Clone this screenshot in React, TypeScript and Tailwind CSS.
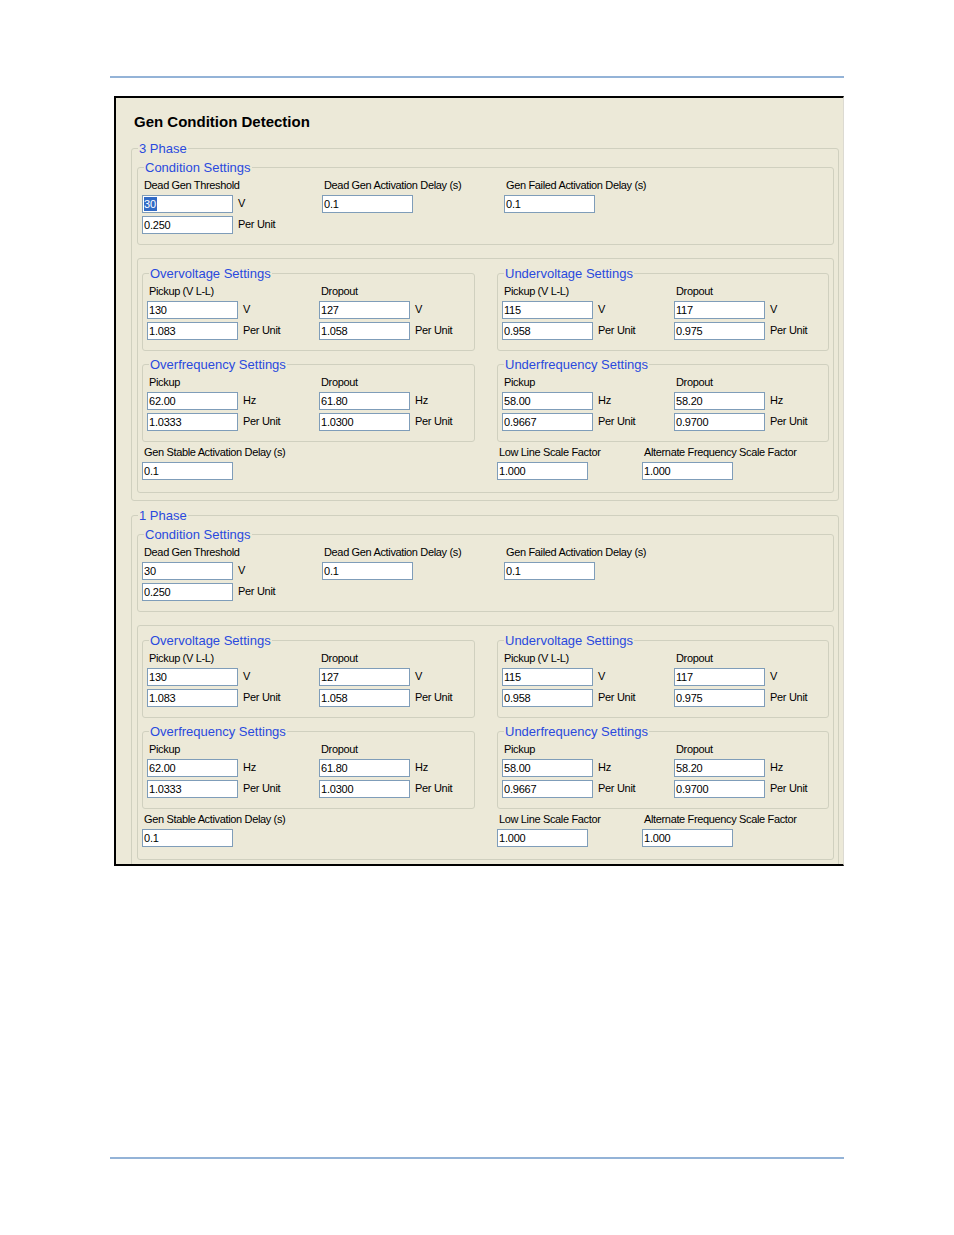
import React from "react";

type Row = [string, string?];

const BG = "bg-[#ece9d8]";

function Label({ text }: { text: string }) {
  return (
    <div className="h-[13px] pl-[2px] text-[11px] leading-[13px] tracking-[-0.35px] text-black whitespace-nowrap">
      {text}
    </div>
  );
}

function Field({ value, selected }: { value: string; selected?: boolean }) {
  return (
    <div className="w-[91px] h-[18px] border border-[#7f9db9] bg-white pl-[1px] flex items-center text-[11px] leading-[16px] tracking-[-0.2px] text-black whitespace-nowrap overflow-hidden">
      {selected ? (
        <span className="bg-[#316ac5] text-white h-[14px] leading-[14px] pr-[1px]">{value}</span>
      ) : (
        <span>{value}</span>
      )}
    </div>
  );
}

function FieldRow({ row, selected }: { row: Row; selected?: boolean }) {
  return (
    <div className="mt-[3px] flex items-start">
      <Field value={row[0]} selected={selected} />
      {row[1] ? (
        <span className="ml-[5px] mt-[2px] text-[11px] leading-[13px] tracking-[-0.3px] text-black whitespace-nowrap">
          {row[1]}
        </span>
      ) : null}
    </div>
  );
}

function Column({ label, rows, selectFirst }: { label: string; rows: Row[]; selectFirst?: boolean }) {
  return (
    <div>
      <Label text={label} />
      {rows.map((r, i) => (
        <FieldRow key={i} row={r} selected={selectFirst && i === 0} />
      ))}
    </div>
  );
}

function GroupBox({
  title,
  className,
  children,
}: {
  title: string;
  className: string;
  children: React.ReactNode;
}) {
  return (
    <div className={`border border-[#d0d0bf] rounded-[3px] ${className}`}>
      <div className={`-mt-[8px] ml-[6px] px-[1px] w-fit ${BG} text-[13px] leading-[15px] text-[#2a4ade] whitespace-nowrap`}>
        {title}
      </div>
      {children}
    </div>
  );
}

type Box = { title: string; cols: { label: string; rows: Row[] }[] };

const boxes: Box[] = [
  {
    title: "Overvoltage Settings",
    cols: [
      { label: "Pickup (V L-L)", rows: [["130", "V"], ["1.083", "Per Unit"]] },
      { label: "Dropout", rows: [["127", "V"], ["1.058", "Per Unit"]] },
    ],
  },
  {
    title: "Undervoltage Settings",
    cols: [
      { label: "Pickup (V L-L)", rows: [["115", "V"], ["0.958", "Per Unit"]] },
      { label: "Dropout", rows: [["117", "V"], ["0.975", "Per Unit"]] },
    ],
  },
  {
    title: "Overfrequency Settings",
    cols: [
      { label: "Pickup", rows: [["62.00", "Hz"], ["1.0333", "Per Unit"]] },
      { label: "Dropout", rows: [["61.80", "Hz"], ["1.0300", "Per Unit"]] },
    ],
  },
  {
    title: "Underfrequency Settings",
    cols: [
      { label: "Pickup", rows: [["58.00", "Hz"], ["0.9667", "Per Unit"]] },
      { label: "Dropout", rows: [["58.20", "Hz"], ["0.9700", "Per Unit"]] },
    ],
  },
];

function Section({ title, selected, className }: { title: string; selected?: boolean; className: string }) {
  return (
    <GroupBox title={title} className={`w-[708px] pb-[7px] ${className}`}>
      <GroupBox title="Condition Settings" className="mt-[11px] ml-[5px] w-[697px]">
        <div className="mt-[4px] pl-[4px] pb-[10px] grid grid-cols-[180px_182px_1fr]">
          <Column
            label="Dead Gen Threshold"
            rows={[["30", "V"], ["0.250", "Per Unit"]]}
            selectFirst={selected}
          />
          <Column label="Dead Gen Activation Delay (s)" rows={[["0.1"]]} />
          <Column label="Gen Failed Activation Delay (s)" rows={[["0.1"]]} />
        </div>
      </GroupBox>
      <div className="mt-[13px] ml-[5px] w-[697px] border border-[#d0d0bf] rounded-[3px] pl-[4px] pt-[14px] pb-[12px]">
        <div className="grid grid-cols-[333px_332px] gap-x-[22px] gap-y-[13px]">
          {boxes.map((b) => (
            <GroupBox key={b.title} title={b.title} className="">
              <div className="mt-[4px] pl-[4px] pb-[10px] grid grid-cols-[172px_1fr]">
                {b.cols.map((c) => (
                  <Column key={c.label} label={c.label} rows={c.rows} />
                ))}
              </div>
            </GroupBox>
          ))}
        </div>
        <div className="mt-[4px] grid grid-cols-[355px_145px_1fr]">
          <Column label="Gen Stable Activation Delay (s)" rows={[["0.1"]]} />
          <Column label="Low Line Scale Factor" rows={[["1.000"]]} />
          <Column label="Alternate Frequency Scale Factor" rows={[["1.000"]]} />
        </div>
      </div>
    </GroupBox>
  );
}

export default function App() {
  return (
    <div className="w-[954px] h-[1235px] bg-white font-['Liberation_Sans',Arial,sans-serif] text-black">
      <div className="pt-[76px] pl-[110px]">
        <div className="w-[734px] h-[2px] bg-[#94b3d7]" />
        <div
          className={`ml-[4px] mt-[18px] w-[730px] h-[770px] border-t-2 border-l-2 border-b-2 border-r border-t-black border-l-black border-b-black border-r-[#dcdad2] ${BG} overflow-hidden`}
        >
          <div className="pt-[15px] pl-[18px] text-[15px] leading-[18px] font-bold text-black">
            Gen Condition Detection
          </div>
          <div className="ml-[15px]">
            <Section title="3 Phase" selected className="mt-[17px]" />
            <Section title="1 Phase" className="mt-[14px]" />
          </div>
        </div>
        <div className="mt-[291px] w-[734px] h-[2px] bg-[#94b3d7]" />
      </div>
    </div>
  );
}
